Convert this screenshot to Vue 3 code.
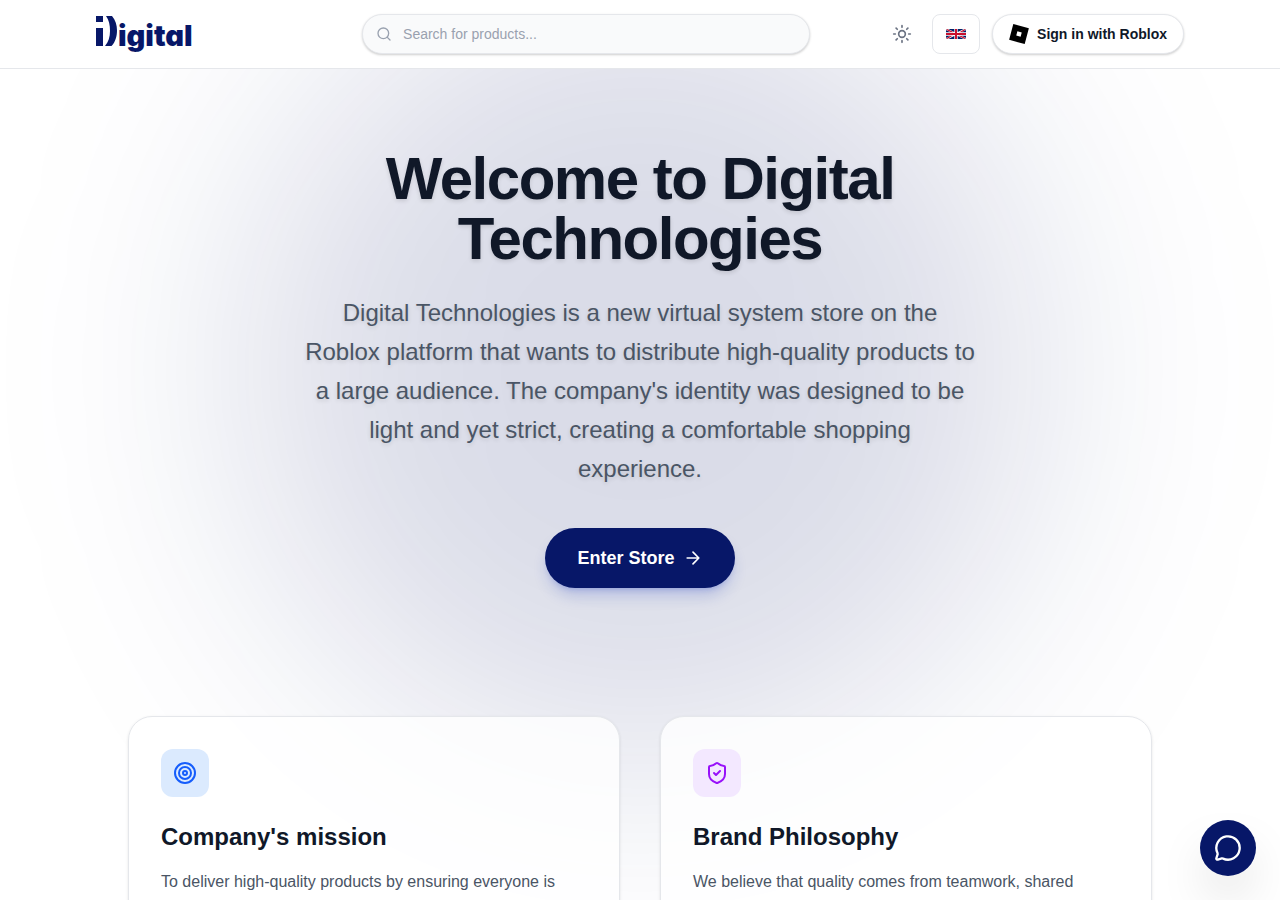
<script setup>
const cards = [
  {
    id: 'mission',
    title: "Company's mission",
    text: 'To deliver high-quality products by ensuring everyone is',
  },
  {
    id: 'philosophy',
    title: 'Brand Philosophy',
    text: 'We believe that quality comes from teamwork, shared',
  },
]
</script>

<template>
  <div class="page">
    <header class="header">
      <div class="header-inner">
        <a class="logo" href="#" aria-label="Digital home">
          <svg width="96" height="38" viewBox="0 0 96 38" fill="#071768">
            <rect x="0" y="1" width="7" height="6" />
            <path d="M0 13h7v18H0z" />
            <path d="M10 1h6c3.500 4 5 9 5 14.500S19.500 27 15.500 31H9c3.500-4 5-9 5-15S13 5 10 1z" />
            <text x="22" y="31" class="logo-text">igital</text>
          </svg>
        </a>

        <form class="search" role="search" @submit.prevent>
          <svg class="search-icon" width="16" height="16" viewBox="0 0 24 24" fill="none" stroke="currentColor" stroke-width="2" stroke-linecap="round" stroke-linejoin="round">
            <circle cx="11" cy="11" r="8" />
            <path d="m21 21-4.340-4.340" />
          </svg>
          <input type="search" aria-label="Search for products" placeholder="Search for products..." />
        </form>

        <div class="actions">
          <button class="theme" type="button" aria-label="Toggle theme">
            <svg width="20" height="20" viewBox="0 0 24 24" fill="none" stroke="currentColor" stroke-width="2" stroke-linecap="round">
              <circle cx="12" cy="12" r="4" />
              <path d="M12 2v2M12 20v2M4.930 4.930l1.410 1.410M17.660 17.660l1.410 1.410M2 12h2M20 12h2M6.340 17.660l-1.410 1.410M19.070 4.930l-1.410 1.410" />
            </svg>
          </button>
          <button class="language" type="button" aria-label="Language: English">
            <svg class="flag" width="20" height="10" viewBox="0 0 60 30">
              <path fill="#012169" d="M0 0h60v30H0z" />
              <path stroke="#fff" stroke-width="6" d="m0 0 60 30M60 0 0 30" />
              <path fill="#c8102e" d="M0 0h4l18 9v2h-4L0 2zM60 0v2l-16 9h-6L56 0zM0 30v-2l16-9h6L4 30zM60 30h-4l-18-9v-2h4l18 9z" />
              <path stroke="#fff" stroke-width="10" d="M30 0v30M0 15h60" />
              <path stroke="#c8102e" stroke-width="6" d="M30 0v30M0 15h60" />
            </svg>
          </button>
          <button class="signin" type="button">
            <svg width="20" height="20" viewBox="0 0 24 24" fill="#000">
              <path fill-rule="evenodd" d="M5.164 0 .160 18.928 18.836 24l5.004-18.928zm8.747 15.354-5.219-1.417 1.399-5.290 5.220 1.418z" />
            </svg>
            Sign in with Roblox
          </button>
        </div>
      </div>
    </header>

    <main class="main">
      <div class="glow"></div>
      <section class="hero">
        <h1>Welcome to Digital Technologies</h1>
        <p>
          Digital Technologies is a new virtual system store on the Roblox platform that wants to
          distribute high-quality products to a large audience. The company's identity was designed
          to be light and yet strict, creating a comfortable shopping experience.
        </p>
        <a class="enter" href="#">
          Enter Store
          <svg width="20" height="20" viewBox="0 0 24 24" fill="none" stroke="currentColor" stroke-width="2" stroke-linecap="round" stroke-linejoin="round">
            <path d="M5 12h14M12 5l7 7-7 7" />
          </svg>
        </a>
      </section>

      <section class="cards">
        <article v-for="card in cards" :key="card.id" class="card">
          <div class="badge" :class="card.id">
            <svg width="24" height="24" viewBox="0 0 24 24" fill="none" stroke="currentColor" stroke-width="2" stroke-linecap="round" stroke-linejoin="round">
              <template v-if="card.id === 'mission'">
                <circle cx="12" cy="12" r="10" />
                <circle cx="12" cy="12" r="6" />
                <circle cx="12" cy="12" r="2" />
              </template>
              <template v-else>
                <path d="M20 13c0 5-3.500 7.500-7.660 8.950a1 1 0 0 1-.67-.01C7.500 20.500 4 18 4 13V6a1 1 0 0 1 1-1c2 0 4.500-1.200 6.240-2.720a1.170 1.170 0 0 1 1.520 0C14.510 3.810 17 5 19 5a1 1 0 0 1 1 1z" />
                <path d="m9 12 2 2 4-4" />
              </template>
            </svg>
          </div>
          <h2>{{ card.title }}</h2>
          <p>{{ card.text }}</p>
        </article>
      </section>
    </main>

    <button class="chat" type="button" aria-label="Open chat">
      <svg width="28" height="28" viewBox="0 0 24 24" fill="none" stroke="currentColor" stroke-width="2" stroke-linecap="round" stroke-linejoin="round">
        <path d="M2.992 16.342a2 2 0 0 1 .094 1.167l-1.065 3.290a1 1 0 0 0 1.236 1.168l3.413-.998a2 2 0 0 1 1.099.092 10 10 0 1 0-4.777-4.719" />
      </svg>
    </button>
  </div>
</template>

<style>
body {
  margin: 0;
  background: #fff;
}
</style>

<style scoped>
.page {
  min-height: 100vh;
  font-family: "Liberation Sans", Arial, sans-serif;
  color: #101828;
}
.page * {
  box-sizing: border-box;
}
button,
input {
  font: inherit;
  color: inherit;
}
button {
  cursor: pointer;
}
svg {
  display: block;
  flex: none;
}
.header {
  position: relative;
  z-index: 2;
  background: #fff;
  border-bottom: 1px solid #e5e7eb;
}
.header-inner {
  display: flex;
  align-items: center;
  max-width: 1088px;
  margin: 0 auto;
  padding: 14px 0;
}
.logo {
  margin-right: 96px;
}
.logo-text {
  font-family: Inter, sans-serif;
  font-size: 29px;
  font-weight: 900;
  font-feature-settings: "cv11";
}
.search {
  position: relative;
  flex: 0 1 448px;
  margin: 0 auto;
}
.search-icon {
  position: absolute;
  left: 14px;
  top: 12px;
  color: #99a1af;
}
.search input {
  display: block;
  width: 100%;
  height: 40px;
  padding: 0 16px 0 40px;
  border: 1px solid #e5e7eb;
  border-radius: 20px;
  background: #f9fafb;
  box-shadow: 0 1px 3px rgba(0, 0, 0, 0.1), 0 1px 2px rgba(0, 0, 0, 0.1);
  font-size: 14px;
  outline: none;
  appearance: none;
}
.search input::placeholder {
  color: #99a1af;
}
.actions {
  display: flex;
  align-items: center;
  gap: 12px;
}
.theme {
  display: grid;
  place-items: center;
  width: 36px;
  height: 36px;
  padding: 0;
  border: 0;
  background: none;
  color: #6a7282;
}
.language {
  display: grid;
  place-items: center;
  width: 48px;
  height: 40px;
  padding: 0;
  border: 1px solid #e5e7eb;
  border-radius: 8px;
  background: #fff;
}
.flag {
  border-radius: 2px;
}
.signin {
  display: flex;
  align-items: center;
  gap: 8px;
  height: 40px;
  padding: 0 16px;
  border: 1px solid #e5e7eb;
  border-radius: 20px;
  background: #fff;
  box-shadow: 0 1px 3px rgba(0, 0, 0, 0.1), 0 1px 2px rgba(0, 0, 0, 0.1);
  font-size: 14px;
  font-weight: 700;
  white-space: nowrap;
}
.main {
  position: relative;
  overflow: hidden;
  padding: 80px 24px 64px;
}
.glow {
  position: absolute;
  left: 50%;
  top: -100px;
  width: 800px;
  height: 800px;
  margin-left: -400px;
  border-radius: 50%;
  background: rgba(8, 23, 101, 0.15);
  filter: blur(120px);
}
.hero {
  position: relative;
  display: flex;
  flex-direction: column;
  align-items: center;
  max-width: 672px;
  margin: 0 auto 128px;
  text-align: center;
}
h1 {
  margin: 0 0 24px;
  font-size: 60px;
  line-height: 60px;
  font-weight: 700;
  letter-spacing: -0.025em;
  text-shadow: 0 2px 4px rgba(0, 0, 0, 0.12);
}
.hero p {
  margin: 0 0 40px;
  font-size: 24px;
  line-height: 39px;
  color: #4a5565;
  text-shadow: 0 2px 4px rgba(0, 0, 0, 0.12);
}
.enter {
  display: inline-flex;
  align-items: center;
  gap: 8px;
  padding: 16px 32px;
  border-radius: 30px;
  background: #071768;
  box-shadow: 0 10px 15px -3px rgba(28, 57, 190, 0.22), 0 4px 6px -4px rgba(28, 57, 190, 0.3);
  color: #fff;
  font-size: 18px;
  line-height: 28px;
  font-weight: 700;
  text-decoration: none;
}
.cards {
  position: relative;
  display: grid;
  grid-template-columns: 1fr 1fr;
  gap: 40px;
  max-width: 1024px;
  margin: 0 auto;
}
.card {
  padding: 32px;
  border: 1px solid #e5e7eb;
  border-radius: 24px;
  background: rgba(255, 255, 255, 0.8);
  box-shadow: 0 1px 3px rgba(0, 0, 0, 0.1);
}
.badge {
  display: grid;
  place-items: center;
  width: 48px;
  height: 48px;
  margin-bottom: 24px;
  border-radius: 12px;
}
.mission {
  background: #dbeafe;
  color: #155dfc;
}
.philosophy {
  background: #f3e8ff;
  color: #9810fa;
}
h2 {
  margin: 0 0 16px;
  font-size: 24px;
  line-height: 32px;
  font-weight: 700;
}
.card p {
  margin: 0;
  font-size: 16px;
  line-height: 26px;
  color: #4a5565;
}
.chat {
  position: fixed;
  right: 24px;
  bottom: 24px;
  z-index: 3;
  display: grid;
  place-items: center;
  width: 56px;
  height: 56px;
  padding: 0;
  border: 0;
  border-radius: 50%;
  background: #071768;
  box-shadow: 0 25px 50px -12px rgba(0, 0, 0, 0.25);
  color: #fff;
}
</style>
